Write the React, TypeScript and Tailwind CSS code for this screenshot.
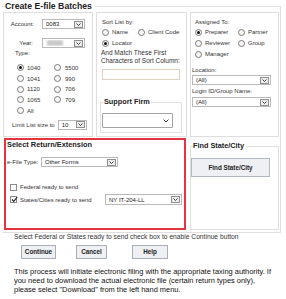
import React from "react";

const Radio = ({ checked = false }: { checked?: boolean }) => (
  <span className="flex h-[7px] w-[7px] shrink-0 items-center justify-center rounded-full border border-[#7c7c7c] bg-[#f6f6f6]">
    {checked && <span className="h-[3px] w-[3px] rounded-full bg-[#111]" />}
  </span>
);

const Check = ({ checked = false }: { checked?: boolean }) => (
  <span className="relative flex h-[7px] w-[7px] shrink-0 border border-[#8a8a8a] bg-white">
    {checked && (
      <svg className="absolute -top-[1px] left-0" width="7" height="7" viewBox="0 0 7 7">
        <path d="M1 3.5 L2.8 5.3 L6.2 1" fill="none" stroke="#222" strokeWidth="1.2" />
      </svg>
    )}
  </span>
);

const Chevron = () => (
  <svg width="5" height="3" viewBox="0 0 5 3">
    <path d="M0.5 0.5 L2.5 2.5 L4.5 0.5" fill="none" stroke="#333" strokeWidth="0.9" />
  </svg>
);

const OldSelect = ({ value, className }: { value?: React.ReactNode; className: string }) => (
  <div className={`flex items-center border border-[#b9b9b9] bg-white pl-[3px] pr-[1px] ${className}`}>
    <span className="flex flex-1 items-center truncate text-[6px] leading-none text-[#222]">{value}</span>
    <span className="flex h-[7px] w-[9px] items-center justify-center border border-[#8f8f8f] bg-[#ececec]">
      <Chevron />
    </span>
  </div>
);

const RadioItem = ({ label, checked, className = "" }: { label: string; checked?: boolean; className?: string }) => (
  <span className={`flex items-center gap-[3px] ${className}`}>
    <Radio checked={checked} />
    <span>{label}</span>
  </span>
);

const types = [
  ["1040", "5500"],
  ["1041", "990"],
  ["1120", "706"],
  ["1065", "709"],
  ["All", ""],
];

export default function App() {
  return (
    <div className="h-[299px] w-[286px] overflow-hidden bg-white font-['Liberation_Sans',Arial,sans-serif] text-[#333]">
      <fieldset className="ml-[2px] w-[279px] border border-l-0 border-[#e0e0e0] pl-[1px] pb-[2px]">
        <legend className="ml-[2px] pr-[3px] text-[8.7px] font-bold leading-[12px] text-[#222]">
          Create E-file Batches
        </legend>

        <div className="grid grid-cols-[90px_91px_89px] gap-x-[3px]">
          {/* left panel */}
          <div className="flex h-[125px] flex-col border border-[#dedede] text-[6px] leading-[8px]">
            <div className="mt-[6px] flex h-[10px] items-center">
              <span className="w-[30px] text-right">Account:</span>
              <OldSelect value="0083" className="ml-[8px] h-[10px] w-[43px]" />
            </div>
            <div className="mt-[9px] flex h-[10px] items-center">
              <span className="w-[29px] text-right">Year:</span>
              <OldSelect
                value={<span className="ml-[1px] h-[6px] w-[16px] bg-[#c9c9c9] blur-[1px]" />}
                className="ml-[9px] h-[10px] w-[43px]"
              />
            </div>
            <span className="mt-[1px] pl-[11px]">Type:</span>
            <div className="mt-[5.5px] flex flex-col pl-[13px]">
              {types.map(([a, b]) => (
                <div key={a} className="flex h-[10.7px] items-center">
                  <RadioItem label={a} checked={a === "1040"} className="w-[37px]" />
                  {b && <RadioItem label={b} className="gap-[4px]" />}
                </div>
              ))}
            </div>
            <div className="mt-[4px] flex h-[10px] items-center pl-[8px]">
              <span>Limit List size to</span>
              <OldSelect value="10" className="ml-[3px] h-[10px] w-[29px]" />
            </div>
          </div>

          {/* middle panel */}
          <div className="flex h-[125px] flex-col border border-[#dedede] text-[6px] leading-[8px]">
            <span className="mt-[5px] pl-[5px]">Sort List by:</span>
            <div className="mt-[1px] flex h-[10px] items-center pl-[5px]">
              <RadioItem label="Name" className="w-[36px]" />
              <RadioItem label="Client Code" />
            </div>
            <div className="mt-[1px] flex h-[10px] items-center pl-[5px]">
              <RadioItem label="Locator" checked />
            </div>
            <span className="mt-[1px] pl-[4px] text-[6.5px]">
              And Match These First
              <br />
              Characters of Sort Column:
            </span>
            <div className="ml-[5px] mt-[4px] h-[11px] w-[78px] border border-[#dcd2bf] bg-white" />
            <fieldset className="ml-[3px] mt-[18px] w-[82px] border border-[#e0e0e0] pb-[4px]">
              <legend className="ml-[2px] px-[1px] text-[7.3px] font-bold leading-[8px] text-[#222]">
                Support Firm
              </legend>
              <div className="ml-[1px] mt-[7px] flex h-[15px] w-[71px] items-center justify-end rounded-[1px] border border-[#a5a5a5] bg-white pr-[3px]">
                <svg width="6" height="4" viewBox="0 0 6 4">
                  <path d="M0.6 0.6 L3 3 L5.4 0.6" fill="none" stroke="#333" strokeWidth="1" />
                </svg>
              </div>
            </fieldset>
          </div>

          {/* right panel */}
          <div className="flex h-[125px] flex-col border border-[#dedede] text-[6px] leading-[8px]">
            <span className="mt-[5px] pl-[4px]">Assigned To:</span>
            <div className="mt-[1px] flex h-[10px] items-center pl-[4px]">
              <RadioItem label="Preparer" checked className="w-[43px]" />
              <RadioItem label="Partner" className="gap-[2px]" />
            </div>
            <div className="mt-[1px] flex h-[10px] items-center pl-[4px]">
              <RadioItem label="Reviewer" className="w-[43px]" />
              <RadioItem label="Group" className="gap-[2px]" />
            </div>
            <div className="mt-[1px] flex h-[10px] items-center pl-[4px]">
              <RadioItem label="Manager" />
            </div>
            <span className="mt-[7px] pl-[1px]">Location:</span>
            <OldSelect value="(All)" className="ml-[1px] mt-[1px] h-[10px] w-[79px]" />
            <span className="mt-[2px] pl-[1px]">Login ID/Group Name:</span>
            <OldSelect value="(All)" className="ml-[1px] mt-[2px] h-[10px] w-[79px]" />
          </div>

          {/* select return / extension */}
          <div className="col-span-2 mx-[1px] mt-[1px] flex h-[92px] flex-col border-2 border-[#e5343f] text-[6px] leading-[8px]">
            <span className="mt-[1px] pl-[1px] text-[7.4px] font-bold text-[#222]">Select Return/Extension</span>
            <div className="mt-[8px] flex h-[10px] items-center pl-[1px]">
              <span className="w-[34px]">e-File Type:</span>
              <OldSelect value="Other Forms" className="h-[10px] w-[77px]" />
            </div>
            <div className="mt-[16px] flex h-[8px] items-center gap-[3px] pl-[4px]">
              <Check />
              <span>Federal ready to send</span>
            </div>
            <div className="mt-[3px] flex h-[11px] items-center gap-[3px] pl-[4px] pr-[2px]">
              <Check checked />
              <span>States/Cities ready to send</span>
              <OldSelect value="NY IT-204-LL" className="ml-auto h-[11px] w-[77px] text-[6.5px]" />
            </div>
          </div>

          {/* find state/city */}
          <fieldset className="mt-[5px] border border-[#e0e0e0] pb-[46px]">
            <legend className="ml-[2px] pr-[2px] text-[7.3px] font-bold leading-[8px] text-[#222]">
              Find State/City
            </legend>
            <button className="mt-[8px] flex h-[19px] w-[79px] items-center justify-center border border-[#b3b7bf] bg-[#eef0f4] text-[6.3px] font-bold text-[#222]">
              Find State/City
            </button>
          </fieldset>
        </div>
      </fieldset>

      <p className="pl-[14px] text-[6.7px] leading-[8px] text-[#333]">
        Select Federal or States ready to send check box to enable Continue button
      </p>
      <div className="mt-[4px] flex h-[14px] text-[6.3px] font-bold text-[#222]">
        <button className="ml-[21px] w-[35px] border border-[#a9adb5] bg-[#eef0f4]">Continue</button>
        <button className="ml-[20px] w-[31px] border border-[#a9adb5] bg-[#eef0f4]">Cancel</button>
        <button className="ml-[25px] w-[36px] border border-[#a9adb5] bg-[#eef0f4]">Help</button>
      </div>
      <p className="mt-[7.5px] w-[276px] pl-[14px] text-[7.45px] leading-[9px] text-[#111]">
        This process will initiate electronic filing with the appropriate taxing authority. If you need to
        download the actual electronic file (certain return types only), please select "Download" from the
        left hand menu.
      </p>
    </div>
  );
}
